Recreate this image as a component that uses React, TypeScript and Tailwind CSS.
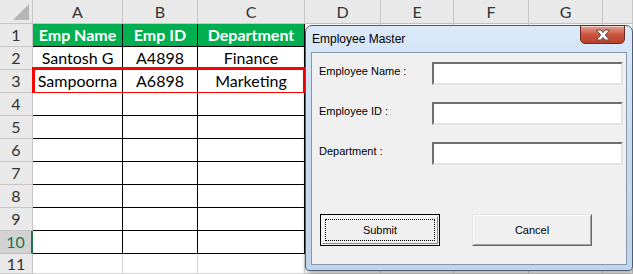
import React from "react";

const cols = [
  { key: "A", w: "w-[90px]" },
  { key: "B", w: "w-[75px]" },
  { key: "C", w: "w-[107px]" },
  { key: "D", w: "w-[76px]" },
  { key: "E", w: "w-[73px]" },
  { key: "F", w: "w-[75px]" },
  { key: "G", w: "w-[74px]" },
  { key: "H", w: "flex-1" },
];

const data: string[][] = [
  ["Emp Name", "Emp ID", "Department"],
  ["Santosh G", "A4898", "Finance"],
  ["Sampoorna", "A6898", "Marketing"],
];

function SheetRow({ n }: { n: number }) {
  const active = n === 10;
  const inTable = n >= 1 && n <= 10;
  const values = data[n - 1] ?? [];
  return (
    <div className={`relative flex ${n === 11 ? "h-[20px]" : "h-[23px]"}`}>
      <div
        className={`w-[33px] shrink-0 flex items-center justify-center border-b border-r ${
          active
            ? "bg-[#d2d2d2] text-[#217346] border-b-[#bcbcbc] border-r-2 border-r-[#217346]"
            : "bg-[#e9e9e9] text-[#333] border-[#c6c6c6]"
        }`}
      >
        {n}
      </div>
      {cols.map((c, i) => {
        const black = inTable && i < 3;
        const header = n === 1 && i < 3;
        return (
          <div
            key={c.key}
            className={`${c.w} shrink-0 flex items-center justify-center border-b border-r ${
              black ? "border-black" : "border-[#d4d4d4]"
            } ${header ? "bg-[#00b050] text-white font-bold" : "bg-white text-black"}`}
          >
            {values[i] ?? ""}
          </div>
        );
      })}
      {n === 3 && (
        <div className="absolute left-[32px] top-[-3px] w-[274px] h-[28px] border-[3px] border-[#ff0000]" />
      )}
    </div>
  );
}

function CloseButton() {
  return (
    <div className="absolute right-[7px] top-[-1px] w-[45px] h-[19px] rounded-b-[5px] border border-[#6e2a20] bg-gradient-to-b from-[#e4a597] via-[#c9553f] to-[#b8402c] flex items-center justify-center shadow-[inset_0_1px_0_rgba(255,255,255,0.5)]">
      <svg width="16" height="12" viewBox="0 0 16 12">
        <path
          d="M1.5 1 H6 L8 3.6 L10 1 H14.5 L10.3 6 L14.5 11 H10 L8 8.4 L6 11 H1.5 L5.7 6 Z"
          fill="#ffffff"
          stroke="#5a4a48"
          strokeWidth="1"
          strokeLinejoin="round"
        />
      </svg>
    </div>
  );
}

function Field({ label }: { label: string }) {
  return (
    <div className="flex h-[23px]">
      <div className="w-[113px] pt-[3px] leading-[13px]">{label}</div>
      <div className="w-[191px] h-[23px] bg-white border-2 border-t-[#6f6f6f] border-l-[#6f6f6f] border-b-[#e3e3e3] border-r-[#e3e3e3]" />
    </div>
  );
}

function Dialog() {
  return (
    <div className="absolute left-[305px] top-[25px] w-[328px] h-[246px] rounded-t-[7px] rounded-b-[4px] border border-[#4f5d70] bg-gradient-to-b from-[#dbe9f8] via-[#c6dbf1] to-[#c0d5ec] shadow-[2px_3px_6px_rgba(0,0,0,0.35)] flex flex-col font-['Liberation_Sans',Arial,sans-serif]">
      <div className="h-[26px] shrink-0 flex items-center pl-[6px] text-[12px] text-black">
        Employee Master
      </div>
      <CloseButton />
      <div className="flex-1 mx-[5px] mb-[5px] border border-[#8596ab] bg-[#f0f0f0] text-[11px] text-black flex flex-col">
        <div className="pl-[7px] pt-[9px] flex flex-col gap-[17px]">
          <Field label="Employee Name :" />
          <Field label="Employee ID :" />
          <Field label="Department :" />
        </div>
        <div className="flex pl-[8px] pt-[49px] gap-[32px]">
          <div className="w-[120px] h-[32px] border border-black bg-[#f0f0f0] p-px">
            <div className="h-full border border-t-white border-l-white border-b-[#8a8a8a] border-r-[#8a8a8a] p-[2px]">
              <div className="h-full border border-dotted border-black flex items-center justify-center">
                Submit
              </div>
            </div>
          </div>
          <div className="w-[120px] h-[32px] border border-t-[#e3e3e3] border-l-[#e3e3e3] border-b-[#696969] border-r-[#696969] bg-[#f0f0f0]">
            <div className="h-full border border-t-white border-l-white border-b-[#a0a0a0] border-r-[#a0a0a0] flex items-center justify-center">
              Cancel
            </div>
          </div>
        </div>
      </div>
    </div>
  );
}

export default function App() {
  const rows = Array.from({ length: 11 }, (_, i) => i + 1);
  return (
    <div className="relative w-[633px] h-[274px] overflow-hidden bg-white font-['Lato','Open_Sans',sans-serif] text-[16px]">
      <div className="flex h-[24px]">
        <div className="w-[33px] shrink-0 bg-[#e9e9e9] border-b border-r border-[#c6c6c6] flex items-end justify-end p-[3px]">
          <svg width="16" height="16" viewBox="0 0 16 16">
            <path d="M16 0 L16 16 L0 16 Z" fill="#b5b5b5" />
          </svg>
        </div>
        {cols.map((c) => (
          <div
            key={c.key}
            className={`${c.w} shrink-0 bg-[#e9e9e9] border-b border-r border-[#c6c6c6] text-[#333] flex items-center justify-center`}
          >
            {c.key === "H" ? "" : c.key}
          </div>
        ))}
      </div>
      {rows.map((n) => (
        <SheetRow key={n} n={n} />
      ))}
      <Dialog />
    </div>
  );
}
